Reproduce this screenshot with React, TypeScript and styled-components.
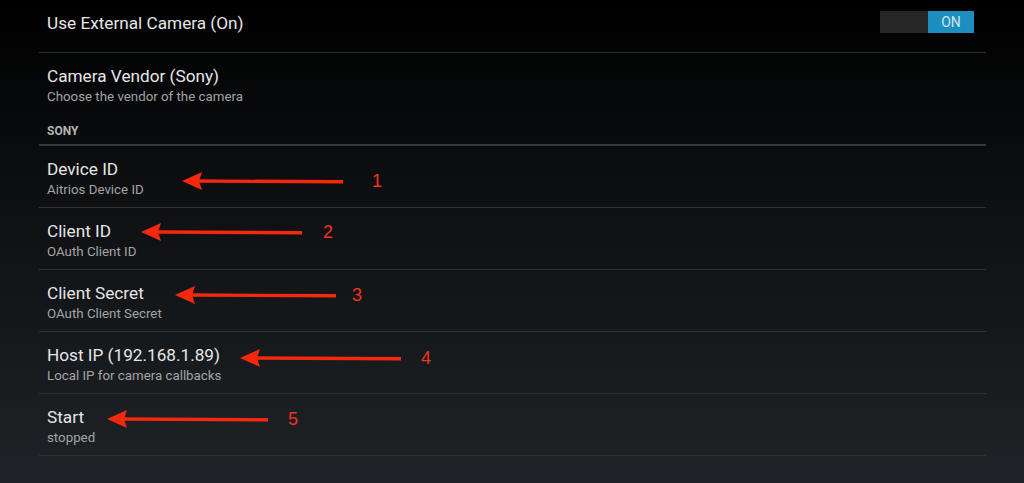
import { FunctionComponent } from "react";
import styled, { createGlobalStyle } from "styled-components";

const GlobalStyle = createGlobalStyle`
  html, body {
    margin: 0;
    padding: 0;
    height: 100%;
  }
  body {
    background: linear-gradient(180deg, #000000 0%, #0d0f11 40%, #1f2327 100%);
    font-family: Roboto, "Liberation Sans", sans-serif;
    overflow: hidden;
  }
`;

const Screen = styled.div`
  width: 1024px;
  height: 483px;
  padding-left: 39px;
  box-sizing: border-box;
`;

const List = styled.div`
  width: 947px;
  display: flex;
  flex-direction: column;
`;

const Row = styled.div<{ $h: number; $line?: boolean }>`
  position: relative;
  height: ${(p) => p.$h}px;
  box-sizing: border-box;
  padding: 12px 8px 0 8px;
  border-bottom: ${(p) => (p.$line === false ? "none" : "1px solid #2e3134")};
  display: flex;
  flex-direction: row;
  justify-content: space-between;
  align-items: flex-start;
`;

const TextCol = styled.div`
  display: flex;
  flex-direction: column;
`;

const Title = styled.div`
  font-size: 17.2px;
  line-height: 22px;
  color: #e6e6e6;
`;

const Summary = styled.div`
  font-size: 13.3px;
  line-height: 18px;
  color: #a4a4a4;
  margin-top: 1px;
`;

const Category = styled.div`
  height: 31px;
  box-sizing: border-box;
  padding: 9px 8px 0 8px;
  border-bottom: 2px solid #35383b;
  font-size: 12px;
  font-weight: 700;
  color: #b4b4b4;
  line-height: 14px;
`;

const Toggle = styled.div`
  margin-top: -1px;
  margin-right: 4px;
  display: flex;
  width: 94px;
  height: 22px;
`;

const ToggleOff = styled.div`
  flex: 1;
  background: #262626;
`;

const ToggleOn = styled.div`
  width: 46px;
  background: #1d8fbf;
  color: #cfe6f0;
  font-size: 14px;
  display: flex;
  align-items: center;
  justify-content: center;
`;

const Note = styled.div<{ $x: number; $y: number }>`
  position: absolute;
  left: ${(p) => p.$x}px;
  top: ${(p) => p.$y}px;
  display: flex;
  align-items: center;
  pointer-events: none;
`;

const NoteNum = styled.span<{ $gap: number }>`
  margin-left: ${(p) => p.$gap}px;
  color: #f2321e;
  font-size: 18px;
  line-height: 20px;
  font-family: "Liberation Sans", Arial, sans-serif;
`;

const Arrow: FunctionComponent = () => (
  <svg width="162" height="20" viewBox="0 0 162 20">
    <line x1="14" y1="10" x2="161" y2="10.8" stroke="#f3280f" strokeWidth="3.4" />
    <polygon points="0,10 20,1 17,10 20,19" fill="#f3280f" />
  </svg>
);

type Item = {
  title: string;
  summary: string;
  x: number;
  dy: number;
  num: string;
  gap: number;
};

const items: Item[] = [
  { title: "Device ID", summary: "Aitrios Device ID", x: 143, dy: 25, num: "1", gap: 28 },
  { title: "Client ID", summary: "OAuth Client ID", x: 102, dy: 14, num: "2", gap: 20 },
  { title: "Client Secret", summary: "OAuth Client Secret", x: 136, dy: 15, num: "3", gap: 15 },
  { title: "Host IP (192.168.1.89)", summary: "Local IP for camera callbacks", x: 201, dy: 16, num: "4", gap: 19 },
  { title: "Start", summary: "stopped", x: 68, dy: 15, num: "5", gap: 19 },
];

export default function App() {
  return (
    <>
      <GlobalStyle />
      <Screen>
        <List>
          <Row $h={53}>
            <TextCol>
              <Title>Use External Camera (On)</Title>
            </TextCol>
            <Toggle>
              <ToggleOff />
              <ToggleOn>ON</ToggleOn>
            </Toggle>
          </Row>
          <Row $h={62} $line={false}>
            <TextCol>
              <Title>Camera Vendor (Sony)</Title>
              <Summary>Choose the vendor of the camera</Summary>
            </TextCol>
          </Row>
          <Category>SONY</Category>
          {items.map((it) => (
            <Row key={it.num} $h={62}>
              <TextCol>
                <Title>{it.title}</Title>
                <Summary>{it.summary}</Summary>
              </TextCol>
              <Note $x={it.x} $y={it.dy}>
                <Arrow />
                <NoteNum $gap={it.gap}>{it.num}</NoteNum>
              </Note>
            </Row>
          ))}
        </List>
      </Screen>
    </>
  );
}
